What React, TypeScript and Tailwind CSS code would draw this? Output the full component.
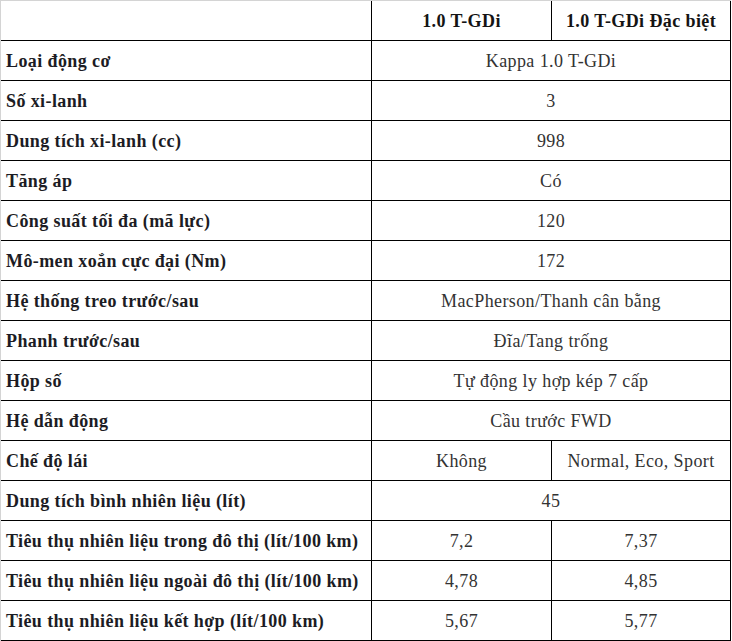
import React from 'react';

type Row = { label: string; values: string[] };

const rows: Row[] = [
  { label: 'Loại động cơ', values: ['Kappa 1.0 T-GDi'] },
  { label: 'Số xi-lanh', values: ['3'] },
  { label: 'Dung tích xi-lanh (cc)', values: ['998'] },
  { label: 'Tăng áp', values: ['Có'] },
  { label: 'Công suất tối đa (mã lực)', values: ['120'] },
  { label: 'Mô-men xoắn cực đại (Nm)', values: ['172'] },
  { label: 'Hệ thống treo trước/sau', values: ['MacPherson/Thanh cân bằng'] },
  { label: 'Phanh trước/sau', values: ['Đĩa/Tang trống'] },
  { label: 'Hộp số', values: ['Tự động ly hợp kép 7 cấp'] },
  { label: 'Hệ dẫn động', values: ['Cầu trước FWD'] },
  { label: 'Chế độ lái', values: ['Không', 'Normal, Eco, Sport'] },
  { label: 'Dung tích bình nhiên liệu (lít)', values: ['45'] },
  { label: 'Tiêu thụ nhiên liệu trong đô thị (lít/100 km)', values: ['7,2', '7,37'] },
  { label: 'Tiêu thụ nhiên liệu ngoài đô thị (lít/100 km)', values: ['4,78', '4,85'] },
  { label: 'Tiêu thụ nhiên liệu kết hợp (lít/100 km)', values: ['5,67', '5,77'] },
];

const cell = 'h-10 flex items-center border-r border-b border-black';

export default function App() {
  return (
    <div className="bg-white w-[732px] h-[641px] font-['Liberation_Serif',serif] text-[18px] tracking-[0.4px] leading-none">
      <div className="w-[731px] border-t border-l border-[#d4d4d4] grid grid-cols-[371px_180px_179px]">
        <div className={cell} />
        <div className={`${cell} justify-center font-bold text-[#141414]`}>1.0 T-GDi</div>
        <div className={`${cell} justify-center font-bold text-[#141414]`}>1.0 T-GDi Đặc biệt</div>
        {rows.map(r => (
          <React.Fragment key={r.label}>
            <div className={`${cell} pl-[5px] font-bold text-[#1c1c24]`}>{r.label}</div>
            {r.values.length === 1 ? (
              <div className={`${cell} col-span-2 justify-center text-[#333]`}>{r.values[0]}</div>
            ) : (
              r.values.map((v, i) => (
                <div key={i} className={`${cell} justify-center text-[#333]`}>{v}</div>
              ))
            )}
          </React.Fragment>
        ))}
      </div>
    </div>
  );
}
